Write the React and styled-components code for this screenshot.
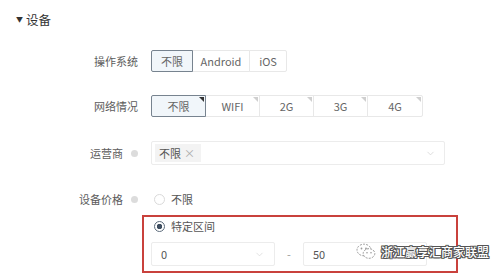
import React from 'react';
import styled, { createGlobalStyle, css } from 'styled-components';
import { ChevronDown } from 'lucide-react';

const GlobalStyle = createGlobalStyle`
    html, body {
        margin: 0;
        padding: 0;
        background: #ffffff;
    }
    body {
        font-family: "Noto Sans CJK SC", "Noto Sans", sans-serif;
        color: #555;
    }
`

const App = () => {
    return (
        <Page>
            <GlobalStyle />
            <SectionTitle>
                <Caret>▼</Caret>
                <span>设备</span>
            </SectionTitle>

            <Row top={12} height={22}>
                <Label>操作系统</Label>
                <Group>
                    <OptionButton w={42} selected>不限</OptionButton>
                    <OptionButton w={58}>Android</OptionButton>
                    <OptionButton w={38}>iOS</OptionButton>
                </Group>
            </Row>

            <Row top={23} height={22}>
                <Label>网络情况</Label>
                <Group>
                    <OptionButton w={55} selected corner>不限</OptionButton>
                    <OptionButton w={55} corner>WIFI</OptionButton>
                    <OptionButton w={55} corner>2G</OptionButton>
                    <OptionButton w={55} corner>3G</OptionButton>
                    <OptionButton w={56} corner>4G</OptionButton>
                </Group>
            </Row>

            <Row top={24} height={24}>
                <Label>运营商<HelpDot /></Label>
                <SelectBox>
                    <Tag>不限 <TagClose>×</TagClose></Tag>
                    <ChevronDown size={11} color="#cfcfcf" strokeWidth={1.5} />
                </SelectBox>
            </Row>

            <Row top={24} height={20}>
                <Label>设备价格<HelpDot /></Label>
                <RadioItem>
                    <Radio />
                    <span>不限</span>
                </RadioItem>
            </Row>

            <Row top={6} height={58}>
                <Label />
                <Highlight>
                    <RadioItem>
                        <Radio checked />
                        <span>特定区间</span>
                    </RadioItem>
                    <RangeRow>
                        <NumberInput>
                            <span>0</span>
                            <ChevronDown size={11} color="#d5d5d5" strokeWidth={1.5} />
                        </NumberInput>
                        <Dash>-</Dash>
                        <NumberInput>
                            <span>50</span>
                        </NumberInput>
                    </RangeRow>
                </Highlight>
            </Row>

            <Watermark>
                <WechatIcon />
                <WatermarkText>浙江赢享汇商家联盟</WatermarkText>
            </Watermark>
        </Page>
    );
}

const WechatIcon = () => (
    <svg width="20" height="17" viewBox="0 0 20 17">
        <ellipse cx="8" cy="7" rx="7" ry="5.8" fill="#fff" stroke="#9a9a9a" strokeWidth="1" strokeDasharray="2 1.2" />
        <ellipse cx="13" cy="10.5" rx="5.8" ry="4.8" fill="#fff" stroke="#9a9a9a" strokeWidth="1" strokeDasharray="2 1.2" />
        <circle cx="5.5" cy="5.5" r="0.9" fill="#9a9a9a" />
        <circle cx="10" cy="5.5" r="0.9" fill="#9a9a9a" />
        <circle cx="11" cy="9.8" r="0.8" fill="#9a9a9a" />
        <circle cx="15" cy="9.8" r="0.8" fill="#9a9a9a" />
    </svg>
)

const Page = styled.div`
    position: relative;
    width: 494px;
    height: 280px;
    overflow: hidden;
    background: #fff;
`

const SectionTitle = styled.div`
    display: flex;
    align-items: center;
    height: 38px;
    padding-left: 16px;
    font-size: 12.5px;
    color: #333;
`

const Caret = styled.span`
    font-size: 7px;
    margin-right: 3px;
    color: #333;
`

const Row = styled.div`
    display: flex;
    align-items: center;
    height: ${props => props.height}px;
    margin-top: ${props => props.top}px;
`

const Label = styled.div`
    display: flex;
    align-items: center;
    justify-content: flex-end;
    width: 138px;
    margin-right: 13px;
    font-size: 11px;
    color: #5c5c5c;
    flex-shrink: 0;
`

const HelpDot = styled.span`
    display: inline-block;
    width: 7px;
    height: 7px;
    border-radius: 50%;
    background: #dcdcdc;
    margin-left: 8px;
`

const Group = styled.div`
    display: flex;
    height: 100%;
`

const OptionButton = styled.div`
    position: relative;
    display: flex;
    align-items: center;
    justify-content: center;
    width: ${props => props.w}px;
    height: 100%;
    box-sizing: border-box;
    border: 1px solid #e8e8e8;
    margin-left: -1px;
    font-size: 11px;
    color: #666;
    background: #fff;

    &:first-child {
        margin-left: 0;
        border-radius: 2px 0 0 2px;
    }
    &:last-child {
        border-radius: 0 2px 2px 0;
    }

    ${props => props.selected && css`
        border-color: #77838f;
        background: #f1f6fa;
        z-index: 1;
    `}

    ${props => props.corner && css`
        &::after {
            content: '';
            position: absolute;
            top: 1px;
            right: 1px;
            border-style: solid;
            border-width: 0 5px 5px 0;
            border-color: transparent ${props.selected ? '#333' : '#cfcfcf'} transparent transparent;
        }
    `}
`

const SelectBox = styled.div`
    display: flex;
    align-items: center;
    justify-content: space-between;
    width: 294px;
    height: 100%;
    box-sizing: border-box;
    border: 1px solid #ececec;
    border-radius: 2px;
    padding: 0 8px 0 3px;
`

const Tag = styled.div`
    display: flex;
    align-items: center;
    height: 18px;
    padding: 0 6px 0 4px;
    background: #f3f3f3;
    font-size: 11px;
    color: #555;
`

const TagClose = styled.span`
    margin-left: 3px;
    font-size: 11px;
    color: #aaa;
`

const RadioItem = styled.div`
    display: flex;
    align-items: center;
    font-size: 11px;
    color: #555;
`

const Radio = styled.span`
    display: inline-block;
    box-sizing: border-box;
    width: 11px;
    height: 11px;
    border-radius: 50%;
    border: 1px solid ${props => props.checked ? '#5d6c7c' : '#dadada'};
    margin: 0 6px 0 3px;
    background: ${props => props.checked ? 'radial-gradient(circle, #3f4e60 0 2.5px, #fff 3px)' : '#fff'};
`

const Highlight = styled.div`
    display: flex;
    flex-direction: column;
    margin-left: -9px;
    width: 316px;
    height: 58px;
    box-sizing: border-box;
    border: 2px solid #c9413c;
    padding: 1px 0 0 7px;
`

const RangeRow = styled.div`
    display: flex;
    align-items: center;
    margin-top: 8px;
`

const NumberInput = styled.div`
    display: flex;
    align-items: center;
    justify-content: space-between;
    width: 124px;
    height: 24px;
    box-sizing: border-box;
    border: 1px solid #ececec;
    border-radius: 2px;
    padding: 0 9px 0 9px;
    font-size: 11px;
    color: #555;
`

const Dash = styled.span`
    width: 28px;
    text-align: center;
    font-size: 11px;
    color: #999;
`

const Watermark = styled.div`
    position: absolute;
    left: 356px;
    top: 243px;
    display: flex;
    align-items: center;
    gap: 5px;
    white-space: nowrap;
`

const WatermarkText = styled.span`
    font-size: 12px;
    font-weight: 500;
    color: #fff;
    white-space: nowrap;
    text-shadow:
        1px 0 0 #555, -1px 0 0 #555, 0 1px 0 #555, 0 -1px 0 #555,
        1px 1px 0 #555, -1px -1px 0 #555, 1px -1px 0 #555, -1px 1px 0 #555;
`

export default App
